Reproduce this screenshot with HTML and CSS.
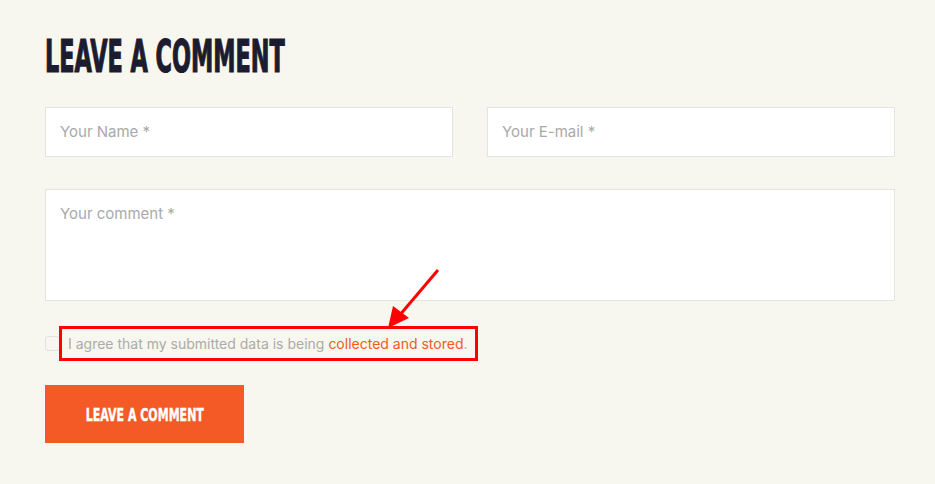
FILE: index.html
```html
<!DOCTYPE html>
<html>
<head>
<meta charset="utf-8">
<link rel="stylesheet" href="styles.css">
</head>
<body>
<div class="wrap">
  <h2 class="title"><span>LEAVE A COMMENT</span></h2>
  <div class="row">
    <div class="field">Your Name *</div>
    <div class="field">Your E-mail *</div>
  </div>
  <div class="field area">Your comment *</div>
  <div class="agree">
    <span class="box"></span>
    <span class="label">I agree that my submitted data is being <a>collected and stored</a>.</span>
    <svg class="arrow" width="60" height="70" viewBox="0 0 60 70">
      <line x1="53" y1="4" x2="14" y2="50" stroke="#f00" stroke-width="3"/>
      <polygon points="3,62 8,40 24,52" fill="#f00"/>
    </svg>
  </div>
  <div class="btn"><span>LEAVE A COMMENT</span></div>
</div>
</body>
</html>
```

FILE: styles.css
```css
html, body {
  margin: 0;
  padding: 0;
  background: #f7f7ef;
}
.wrap {
  width: 850px;
  padding: 34px 0 0 45px;
  font-family: Inter, "Liberation Sans", sans-serif;
}
.title {
  margin: 0;
  height: 46px;
  font-family: "DejaVu Sans", sans-serif;
  font-stretch: condensed;
  font-weight: bold;
  font-size: 44px;
  line-height: 46px;
  color: #1d1b30;
  -webkit-text-stroke: 1.2px #1d1b30;
}
.title span {
  display: inline-block;
  transform: scaleX(0.565);
  transform-origin: left center;
  white-space: nowrap;
}
.row {
  display: flex;
  gap: 34px;
  margin-top: 27px;
}
.field {
  flex: 1;
  box-sizing: border-box;
  height: 50px;
  background: #fff;
  border: 1px solid #e4e5df;
  padding: 14px 14px;
  font-size: 15px;
  line-height: 20px;
  color: #a9a9ab;
}
.area {
  margin-top: 32px;
  height: 112px;
}
.agree {
  position: relative;
  display: flex;
  align-items: center;
  margin-top: 25px;
  height: 35px;
}
.box {
  width: 13px;
  height: 13px;
  border: 1px solid #e2e3dd;
  border-radius: 3px;
  background: #f7f7ef;
  margin-right: -1px;
}
.label {
  box-sizing: border-box;
  height: 35px;
  border: 3px solid #f00;
  padding: 0 7px 0 6px;
  display: flex;
  align-items: center;
  font-size: 14px;
  color: #ababab;
  white-space: nowrap;
}
.label a {
  color: #f15a22;
  margin-left: 4px;
}
.arrow {
  position: absolute;
  left: 340px;
  top: -60px;
}
.btn {
  margin-top: 24px;
  width: 199px;
  height: 58px;
  background: #f45a26;
  display: flex;
  align-items: center;
  justify-content: center;
}
.btn span {
  display: inline-block;
  font-family: "DejaVu Sans", sans-serif;
  font-stretch: condensed;
  font-weight: bold;
  font-size: 18px;
  color: #fff;
  -webkit-text-stroke: 0.4px #fff;
  transform: scaleX(0.68);
  white-space: nowrap;
}
```
